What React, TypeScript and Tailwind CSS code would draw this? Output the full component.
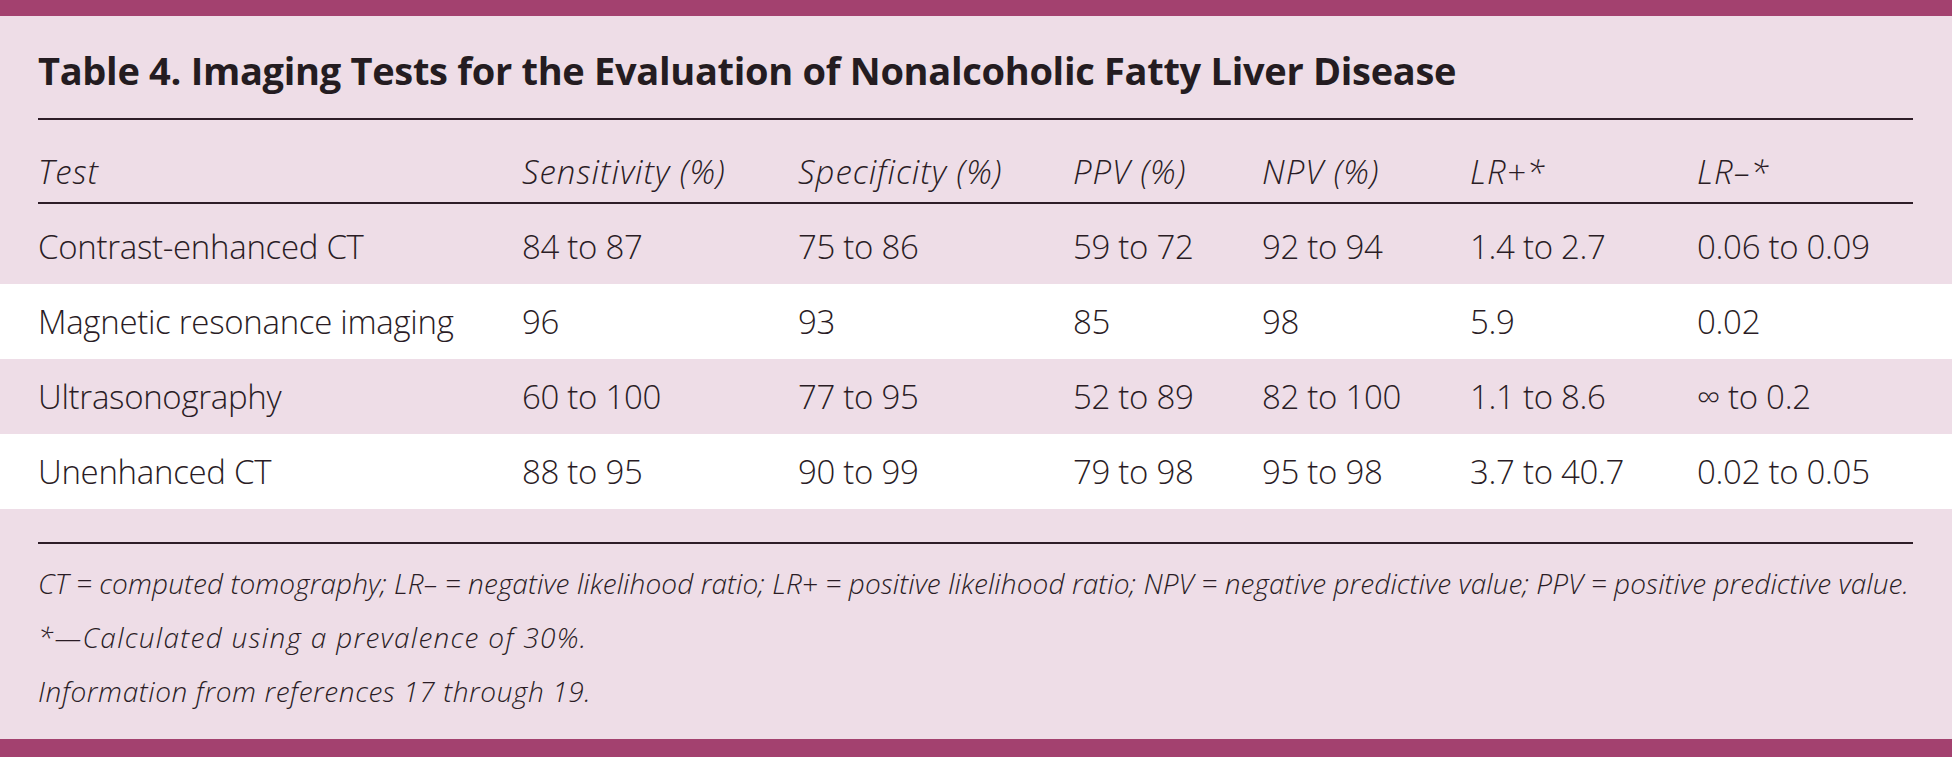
const rows = [
  ['Contrast-enhanced CT', '84 to 87', '75 to 86', '59 to 72', '92 to 94', '1.4 to 2.7', '0.06 to 0.09'],
  ['Magnetic resonance imaging', '96', '93', '85', '98', '5.9', '0.02'],
  ['Ultrasonography', '60 to 100', '77 to 95', '52 to 89', '82 to 100', '1.1 to 8.6', '\u221e to 0.2'],
  ['Unenhanced CT', '88 to 95', '90 to 99', '79 to 98', '95 to 98', '3.7 to 40.7', '0.02 to 0.05'],
]

const headers = ['Test', 'Sensitivity (%)', 'Specificity (%)', 'PPV (%)', 'NPV (%)', 'LR+*', 'LR\u2013*']

const cols = 'grid grid-cols-[484px_276px_275px_189px_208px_227px_1fr]'

export default function App() {
  return (
    <div className="w-[1952px] h-[757px] flex flex-col bg-[#eedde7] text-[#2a1c25] font-['Open_Sans',sans-serif] overflow-hidden">
      <div className="h-4 bg-[#a3416f]" />

      <div className="pl-[38px] pr-[39px]">
        <h1 className="mt-[30px] text-[38px] leading-[48px] font-bold tracking-[-0.3px] text-[#241c21] whitespace-nowrap">
          Table 4. Imaging Tests for the Evaluation of Nonalcoholic Fatty Liver Disease
        </h1>
        <div className="mt-6 h-[2px] bg-[#2e1d28]" />
        <div className={`${cols} mt-8 text-[33px] leading-[40px] font-light italic tracking-[1px]`}>
          {headers.map((h) => (
            <div key={h} className="whitespace-nowrap">
              {h}
            </div>
          ))}
        </div>
        <div className="mt-[10px] h-[2px] bg-[#2e1d28]" />
      </div>

      <div className="mt-[5px]">
        {rows.map((r, i) => (
          <div
            key={r[0]}
            className={`h-[75px] flex items-center pl-[38px] pr-[39px] ${i % 2 === 1 ? 'bg-white' : 'bg-[#eedde7]'}`}
          >
            <div className={`${cols} w-full text-[33px] leading-[40px] font-light tracking-[-0.3px]`}>
              {r.map((c, j) => (
                <div key={j} className="whitespace-nowrap">
                  {c}
                </div>
              ))}
            </div>
          </div>
        ))}
      </div>

      <div className="pl-[38px] pr-[39px]">
        <div className="mt-[33px] h-[2px] bg-[#2e1d28]" />
        <div className="mt-3 text-[28px] leading-[54px] font-light italic">
          <p className="whitespace-nowrap tracking-[0.1px]">
            CT = computed tomography; LR{'\u2013'} = negative likelihood ratio; LR+ = positive likelihood ratio; NPV = negative predictive value; PPV = positive predictive value.
          </p>
          <p className="tracking-[1.3px]">*{'\u2014'}Calculated using a prevalence of 30%.</p>
          <p className="tracking-[0.6px]">Information from references 17 through 19.</p>
        </div>
      </div>

      <div className="mt-auto h-[18px] bg-[#a3416f]" />
    </div>
  )
}
